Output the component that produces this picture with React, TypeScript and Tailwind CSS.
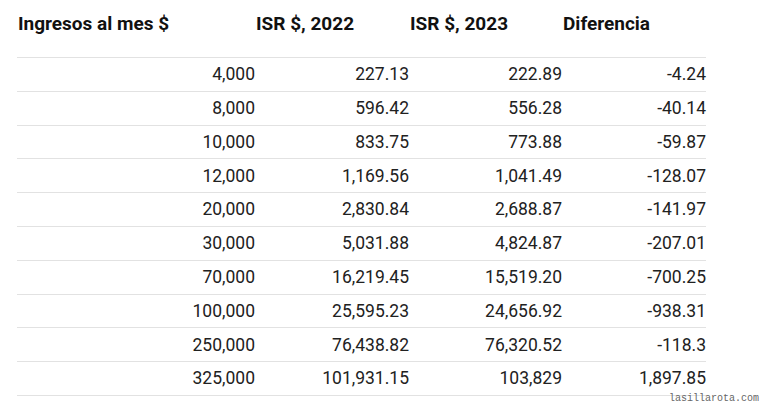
const rows: [string, string, string, string][] = [
    ['4,000', '227.13', '222.89', '-4.24'],
    ['8,000', '596.42', '556.28', '-40.14'],
    ['10,000', '833.75', '773.88', '-59.87'],
    ['12,000', '1,169.56', '1,041.49', '-128.07'],
    ['20,000', '2,830.84', '2,688.87', '-141.97'],
    ['30,000', '5,031.88', '4,824.87', '-207.01'],
    ['70,000', '16,219.45', '15,519.20', '-700.25'],
    ['100,000', '25,595.23', '24,656.92', '-938.31'],
    ['250,000', '76,438.82', '76,320.52', '-118.3'],
    ['325,000', '101,931.15', '103,829', '1,897.85'],
];

const cols = 'grid grid-cols-[238px_154px_153px_144px]';

export default function App() {
    return (
        <div
            className="relative h-[412px] w-[768px] overflow-hidden bg-white text-[#212121]"
            style={{ fontFamily: 'Roboto, "Liberation Sans", sans-serif' }}
        >
            <div className="ml-[17px] w-[689px]">
                <div className={`${cols} h-[57px] pt-[13px] text-[19px] font-bold leading-[22px] text-[#111]`}>
                    <div className="pl-[1px]">Ingresos al mes $</div>
                    <div className="pl-[1px]">ISR $, 2022</div>
                    <div className="pl-[1px]">ISR $, 2023</div>
                    <div className="pl-[1px]">Diferencia</div>
                </div>
                <div className="border-b border-[#e2e2e2]">
                    {rows.map((r) => (
                        <div
                            key={r[0]}
                            className={`${cols} h-[33.8px] items-center border-t border-[#e2e2e2] text-right text-[17.5px]`}
                        >
                            <div>{r[0]}</div>
                            <div>{r[1]}</div>
                            <div>{r[2]}</div>
                            <div>{r[3]}</div>
                        </div>
                    ))}
                </div>
            </div>
            <div
                className="absolute left-[669px] top-[393px] text-[10px] leading-[12px] text-[#666]"
                style={{ fontFamily: '"Liberation Mono", "DejaVu Sans Mono", monospace' }}
            >
                lasillarota.com
            </div>
        </div>
    );
}
